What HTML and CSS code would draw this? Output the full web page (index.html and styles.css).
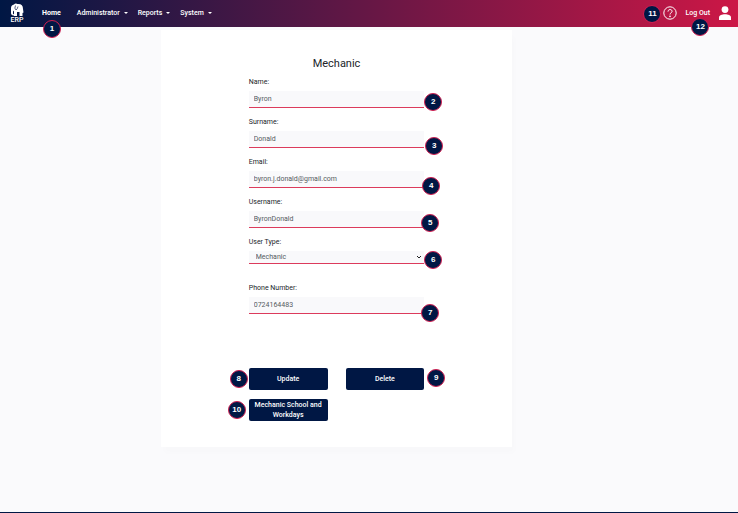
FILE: index.html
```html
<!DOCTYPE html>
<html lang="en">
<head>
<meta charset="utf-8">
<title>Mechanic - ERP</title>
<link rel="stylesheet" href="styles.css">
</head>
<body>
<header class="topbar">
  <a class="logo" href="#" aria-label="ERP home">
    <svg class="logo-mark" viewBox="0 0 28 28" aria-hidden="true"><path d="M2 21L2 10Q2 4 8 3Q11 0 15 2Q26 1 26 12L27 19L25 20L25 26L19 26L19 18L14 18L14 26L8 26L8 15L6 17L6 21Q6 23 9 22L8 25Q3 26 2 21Z" fill="#fff"/><path d="M11 5Q8 11 12 14Q15 12 16 7" fill="none" stroke="#061545" stroke-width="1.3"/></svg>
    <span class="logo-text">ERP</span>
  </a>
  <nav class="nav">
    <a class="nav-link current" href="#">Home<span class="badge badge-1">1</span></a>
    <button class="nav-link menu" type="button">Administrator</button>
    <button class="nav-link menu" type="button">Reports</button>
    <button class="nav-link menu" type="button">System</button>
  </nav>
  <div class="account">
    <a class="help" href="#" aria-label="Help"><svg viewBox="0 0 14 14" width="14" height="14" aria-hidden="true"><circle cx="7" cy="7" r="6.2" fill="none" stroke="#fff"/><path d="M5 5.6C5 2.8 9.2 3 9.1 5.4C9 6.8 7 6.8 7 8.5" fill="none" stroke="#fff"/><circle cx="7" cy="10.4" r=".8" fill="#fff"/></svg><span class="badge badge-11">11</span></a>
    <a class="nav-link logout" href="#">Log Out<span class="badge badge-12">12</span></a>
    <a class="profile" href="#" aria-label="Profile"><svg viewBox="0 0 14 14" width="14" height="14" aria-hidden="true"><circle cx="7" cy="3.6" r="3.4" fill="#fff"/><path d="M1 14V11.5C1 9.3 4 8.2 7 8.2S13 9.3 13 11.5V14Z" fill="#fff"/></svg></a>
  </div>
</header>
<main class="page">
  <section class="card">
    <h1 class="title">Mechanic</h1>
    <form class="form">
      <div class="field"><label for="name">Name:</label><input id="name" type="text" value="Byron"><span class="badge badge-2">2</span></div>
      <div class="field"><label for="surname">Surname:</label><input id="surname" type="text" value="Donald"><span class="badge badge-3">3</span></div>
      <div class="field"><label for="email">Email:</label><input id="email" type="email" value="byron.j.donald@gmail.com"><span class="badge badge-4">4</span></div>
      <div class="field"><label for="username">Username:</label><input id="username" type="text" value="ByronDonald"><span class="badge badge-5">5</span></div>
      <div class="field field-select"><label for="type">User Type:</label><select id="type"><option>Mechanic</option></select><svg class="chevron" viewBox="0 0 6 4" aria-hidden="true"><path d="M1 1L3 3L5 1" fill="none" stroke="#222"/></svg><span class="badge badge-6">6</span></div>
      <div class="field"><label for="phone">Phone Number:</label><input id="phone" type="tel" value="0724164483"><span class="badge badge-7">7</span></div>
      <div class="actions">
        <div class="action"><button class="button" type="button">Update</button><span class="badge badge-8">8</span></div>
        <div class="action"><button class="button" type="button">Delete</button><span class="badge badge-9">9</span></div>
        <div class="action"><button class="button" type="button">Mechanic School and Workdays</button><span class="badge badge-10">10</span></div>
      </div>
    </form>
  </section>
</main>
<footer class="footer"></footer>
</body>
</html>
```
FILE: styles.css
```css
* { box-sizing: border-box; }

body {
  margin: 0;
  min-height: 100vh;
  display: flex;
  flex-direction: column;
  background: #fafafc;
  color: #212529;
  font: 7px/14px Roboto, sans-serif;
}

.topbar {
  display: flex;
  align-items: center;
  height: 27px;
  padding: 0 6px 2px 10px;
  background: linear-gradient(90deg, #001744, #cc1746);
}

.logo {
  display: flex;
  flex-direction: column;
  align-items: center;
  width: 14px;
  margin-right: 18px;
  color: #fff;
  text-decoration: none;
}

.logo-mark { width: 14px; height: 14px; }
.logo-text { font-size: 7px; line-height: 6px; font-weight: 500; }

.nav { display: flex; gap: 10px; }

.nav-link {
  position: relative;
  padding: 0;
  border: 0;
  background: none;
  color: #fff;
  font: 500 7px/12px Roboto, sans-serif;
  text-decoration: none;
}

.current { margin-right: 6px; font-weight: 700; }

.menu { display: flex; align-items: center; gap: 4px; }
.menu::after {
  content: "";
  border: 2px solid transparent;
  border-top-color: #fff;
  border-bottom: 0;
}

.account { display: flex; align-items: center; gap: 8px; margin-left: auto; }
.help, .profile { position: relative; display: flex; }

.page {
  flex: 1;
  display: grid;
  grid-template-columns: 161fr 351fr 226fr;
  align-items: start;
  padding-top: 3px;
}

.card {
  grid-column: 2;
  padding: 26px 25%;
  background: #fff;
  box-shadow: 3px 6px 6px #00000003;
}

.title {
  margin: 0 0 3px;
  font-size: 11px;
  line-height: 16px;
  font-weight: 400;
  text-align: center;
}

.form { display: flex; flex-direction: column; gap: 7px; }
.field { position: relative; display: flex; flex-direction: column; gap: 2px; }
.field-select { margin-bottom: 10px; }

.field input, .field select {
  width: 100%;
  height: 17px;
  margin: 0;
  padding: 0 5px;
  border: 0;
  border-bottom: 1px solid #dc3b5c;
  border-radius: 0;
  outline: 0;
  background: #f9f9fb;
  color: #555b61;
  font: 7px/12px Roboto, sans-serif;
}

.field select { appearance: none; height: 13px; padding: 0 7px; }

.chevron { position: absolute; right: 2px; bottom: 5px; width: 6px; height: 4px; }

.actions {
  display: grid;
  grid-template-columns: 1fr 1fr;
  gap: 9px 18px;
  margin-top: 47px;
}

.action { position: relative; }

.button {
  display: block;
  width: 100%;
  height: 22px;
  padding: 0 4px;
  border: 0;
  border-radius: 2px;
  background: #001744;
  color: #fff;
  font: 500 7px/10px Roboto, sans-serif;
}

.badge {
  position: absolute;
  width: 18px;
  height: 18px;
  border: 1px solid #d21f51;
  border-radius: 50%;
  background: #001744;
  color: #fff;
  font: 700 8px/16px "Liberation Sans", sans-serif;
  text-align: center;
}

.badge-1 { top: 13px; left: 1px; }
.badge-2 { top: 18px; right: -18px; }
.badge-3 { top: 22px; right: -19px; }
.badge-4 { top: 22px; right: -16px; }
.badge-5 { top: 19px; right: -15px; }
.badge-6 { top: 16px; right: -18px; }
.badge-7 { top: 23px; right: -15px; }
.badge-8 { top: 2px; left: -19px; }
.badge-9 { top: 1px; right: -21px; }
.badge-10 { top: 2px; left: -21px; }
.badge-11 { top: -1px; right: 16px; }
.badge-12 { top: 11px; left: 6px; }

.footer { height: 1px; background: #001744; }
```
